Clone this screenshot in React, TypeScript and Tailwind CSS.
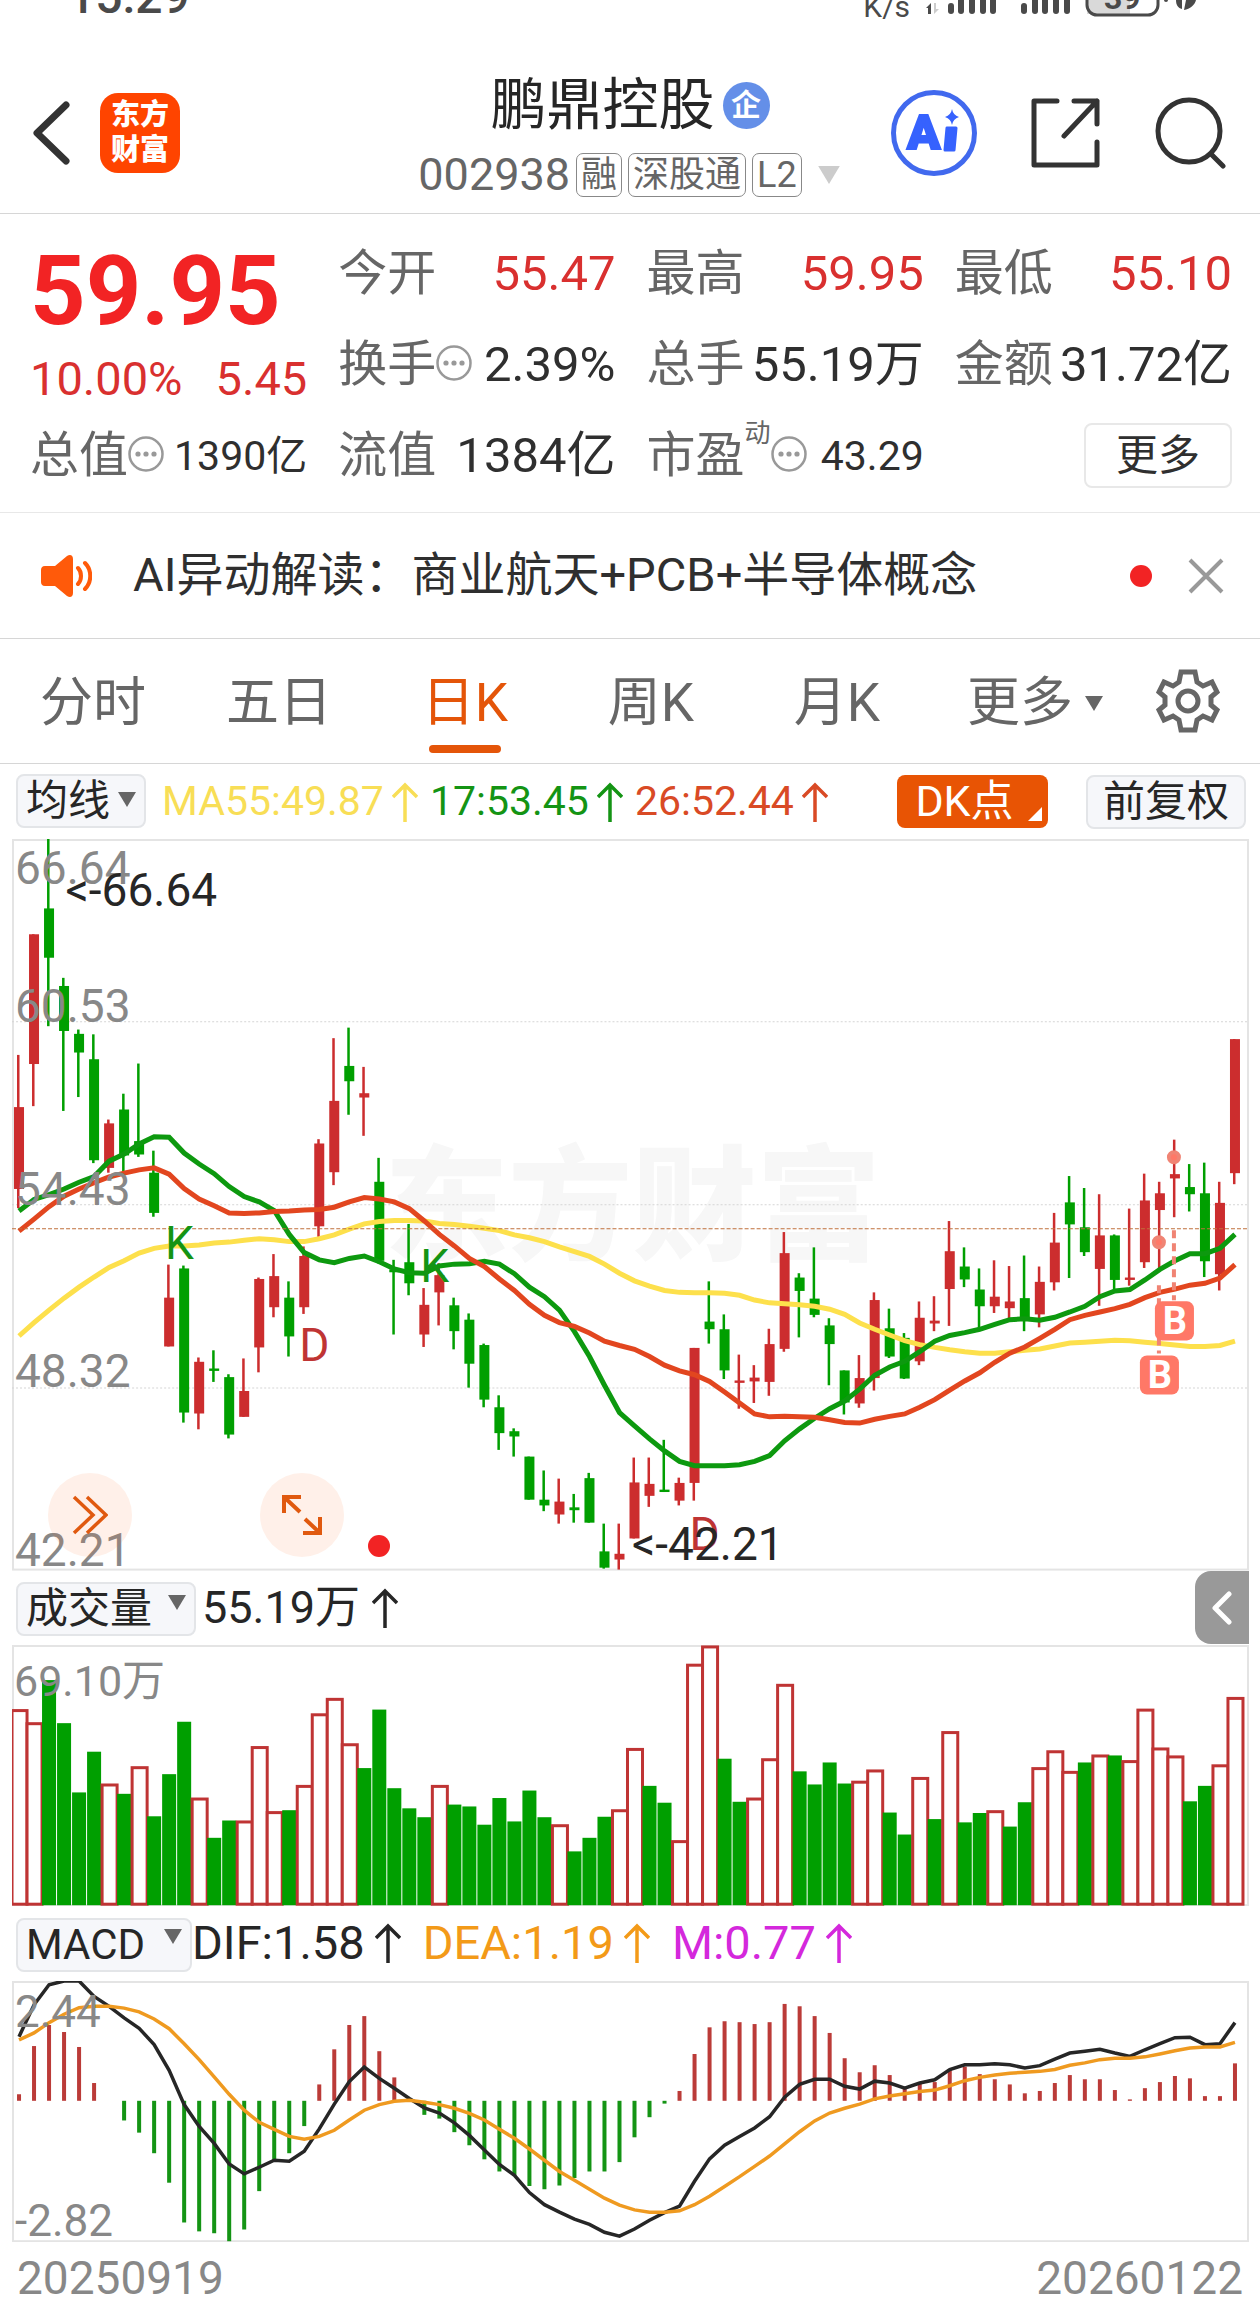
import { useState } from 'react'
import type { ReactNode } from 'react'

type Candle = ['r' | 'g', number, number, number, number]

const RED = '#cc2d2e'
const GREEN = '#009f00'
const STEP = 15

// [colour, high, body top, body bottom, low], measured downwards
const candles: Candle[] = [
  ['r', 470, 579, 750, 790], ['r', 218, 218, 489, 577], ['g', 19, 164, 267, 410],
  ['g', 309, 326, 420, 587], ['g', 417, 426, 465, 558], ['g', 427, 479, 690, 696],
  ['r', 605, 613, 706, 716], ['g', 551, 584, 680, 716], ['g', 488, 650, 678, 683],
  ['g', 670, 716, 800, 808], ['r', 908, 977, 1079, 1079], ['g', 910, 916, 1217, 1238],
  ['r', 1102, 1111, 1219, 1252], ['g', 1087, 1125, 1130, 1153], ['g', 1137, 1143, 1263, 1271],
  ['r', 1104, 1172, 1226, 1226], ['r', 935, 938, 1081, 1133], ['r', 886, 932, 997, 1018],
  ['g', 943, 977, 1058, 1100], ['r', 870, 890, 997, 1011], ['r', 646, 655, 828, 850],
  ['r', 435, 566, 715, 742], ['g', 413, 493, 525, 595], ['r', 495, 550, 559, 639],
  ['g', 685, 735, 900, 906], ['g', 898, 918, 924, 1054], ['g', 823, 903, 947, 972],
  ['r', 957, 992, 1054, 1080], ['r', 905, 930, 966, 1035], ['g', 977, 993, 1047, 1085],
  ['g', 1010, 1023, 1115, 1165], ['g', 1073, 1076, 1190, 1206], ['g', 1181, 1206, 1260, 1295],
  ['g', 1250, 1256, 1267, 1309], ['g', 1309, 1309, 1399, 1399], ['g', 1338, 1399, 1411, 1423],
  ['r', 1355, 1403, 1430, 1449], ['g', 1387, 1415, 1421, 1447], ['g', 1343, 1354, 1447, 1447],
  ['g', 1449, 1507, 1541, 1543], ['r', 1449, 1512, 1524, 1545], ['r', 1311, 1363, 1480, 1480],
  ['r', 1311, 1366, 1391, 1414], ['g', 1274, 1378, 1383, 1383], ['r', 1353, 1364, 1401, 1411],
  ['r', 1082, 1082, 1364, 1401], ['g', 943, 1027, 1043, 1073], ['g', 1012, 1043, 1129, 1147],
  ['r', 1096, 1150, 1155, 1209], ['r', 1118, 1144, 1152, 1197], ['r', 1042, 1074, 1153, 1182],
  ['r', 840, 884, 1084, 1090], ['g', 926, 935, 963, 1060], ['g', 872, 979, 1013, 1018],
  ['g', 1020, 1035, 1074, 1160], ['g', 1129, 1129, 1196, 1221], ['r', 1097, 1145, 1198, 1207],
  ['r', 966, 982, 1145, 1171], ['g', 1000, 1041, 1100, 1103], ['g', 1051, 1061, 1146, 1147],
  ['r', 985, 1019, 1110, 1118], ['r', 974, 1025, 1031, 1047], ['r', 817, 880, 959, 1036],
  ['g', 872, 912, 939, 955], ['g', 916, 960, 995, 1045], ['r', 899, 975, 995, 1009],
  ['r', 911, 985, 999, 1020], ['g', 889, 978, 1025, 1047], ['r', 912, 944, 1012, 1039],
  ['r', 800, 862, 945, 962], ['g', 723, 778, 824, 936], ['g', 748, 830, 882, 890],
  ['r', 761, 847, 917, 994], ['g', 845, 847, 940, 962], ['r', 791, 935, 940, 952],
  ['r', 718, 774, 903, 915], ['r', 735, 759, 794, 915], ['r', 647, 719, 728, 809],
  ['g', 698, 746, 761, 797], ['g', 695, 759, 901, 934], ['r', 735, 779, 928, 962],
  ['r', 437, 437, 717, 740],
]

const ma17 = [
  796, 772, 762, 750, 736, 724, 692, 677, 656, 641, 642, 675, 698, 718, 745, 766, 777, 795, 845,
  883, 898, 904, 895, 890, 902, 917, 925, 926, 911, 907, 906, 901, 907, 927, 955, 975, 1003, 1048,
  1100, 1160, 1217, 1245, 1272, 1297, 1319, 1328, 1328, 1328, 1326, 1319, 1307, 1276, 1251, 1229,
  1209, 1193, 1168, 1139, 1122, 1110, 1090, 1068, 1056, 1050, 1043, 1033, 1023, 1021, 1024, 1018,
  1007, 995, 975, 963, 960, 940, 918, 900, 885, 885, 874, 845,
]

const ma26 = [
  838, 813, 787, 765, 750, 737, 725, 717, 710, 706, 719, 749, 771, 785, 800, 801, 800, 797, 796,
  794, 793, 788, 777, 768, 771, 777, 791, 817, 845, 869, 895, 912, 938, 962, 991, 1014, 1029, 1037,
  1051, 1068, 1077, 1085, 1100, 1118, 1130, 1138, 1152, 1174, 1197, 1220, 1226, 1225, 1226, 1227,
  1232, 1238, 1239, 1231, 1225, 1220, 1206, 1190, 1170, 1151, 1134, 1112, 1093, 1080, 1062, 1043,
  1023, 1014, 1007, 1000, 991, 977, 966, 959, 951, 947, 936, 908,
]

const ma55 = [
  1057, 1029, 1003, 978, 955, 934, 914, 900, 884, 874, 869, 869, 867, 863, 861, 857, 854, 856, 860,
  860, 854, 846, 834, 823, 818, 816, 816, 817, 822, 824, 828, 832, 837, 846, 852, 860, 871, 881,
  891, 907, 926, 942, 953, 962, 966, 967, 967, 968, 972, 982, 988, 990, 992, 995, 1001, 1012, 1030,
  1043, 1055, 1067, 1075, 1081, 1086, 1090, 1093, 1093, 1090, 1087, 1084, 1078, 1072, 1070, 1068,
  1066, 1067, 1070, 1073, 1076, 1079, 1079, 1077, 1068,
]

// top edge of each bar, negative for a falling day
const volumes = [
  298, 326, -235, -327, -475, -388, 457, -478, 420, -526, -436, -324, 487, -572, -535, 536, 377,
  516, -513, 460, 307, 274, 371, -423, -298, -466, -509, -528, 460, -501, -505, -544, -487, -537,
  -471, -528, 544, -601, -572, -527, 512, 381, -461, -497, 578, 201, 162, -403, -495, 487, 403, 244,
  -430, -458, -411, -456, 451, 427, -518, -565, 443, -532, 345, -539, -519, 514, -548, -496, 422,
  386, 430, -411, 395, -396, 407, 297, 380, 397, -494, -461, 416, 272,
]

const macdBars = [
  1121, 1018, 973, 988, 1020, 1097, 1135, 1177, 1203, 1247, 1310, 1395, 1414, 1418, 1435, 1410,
  1328, 1265, 1247, 1189, 1100, 1025, 973, 954, 1029, 1085, 1130, 1165, 1173, 1202, 1230, 1260,
  1286, 1295, 1317, 1324, 1316, 1300, 1286, 1286, 1266, 1213, 1170, 1141, 1114, 1035, 978, 965, 967,
  971, 967, 928, 933, 954, 990, 1044, 1074, 1059, 1080, 1107, 1097, 1095, 1067, 1062, 1078, 1089,
  1100, 1119, 1114, 1097, 1080, 1089, 1089, 1112, 1132, 1108, 1095, 1082, 1087, 1125, 1125, 1055,
]

const dif = [
  998, 930, 887, 879, 879, 912, 933, 958, 980, 1015, 1070, 1143, 1190, 1226, 1270, 1291, 1277,
  1262, 1264, 1243, 1195, 1142, 1094, 1063, 1087, 1108, 1130, 1150, 1161, 1182, 1209, 1240, 1271,
  1294, 1331, 1357, 1373, 1388, 1399, 1416, 1424, 1409, 1390, 1374, 1360, 1307, 1259, 1230, 1211,
  1193, 1169, 1127, 1100, 1089, 1089, 1104, 1110, 1093, 1097, 1108, 1097, 1090, 1068, 1058, 1058,
  1056, 1058, 1065, 1060, 1046, 1033, 1029, 1025, 1033, 1040, 1026, 1013, 1000, 999, 1015, 1013,
  968,
]

const dea = [
  1005, 990, 968, 950, 936, 933, 933, 937, 945, 960, 981, 1013, 1047, 1084, 1121, 1155, 1181, 1196,
  1211, 1217, 1211, 1198, 1176, 1155, 1143, 1136, 1134, 1138, 1143, 1151, 1162, 1176, 1196, 1215,
  1238, 1262, 1286, 1305, 1324, 1343, 1358, 1368, 1373, 1373, 1370, 1357, 1339, 1318, 1297, 1275,
  1253, 1227, 1201, 1178, 1161, 1151, 1142, 1131, 1125, 1120, 1115, 1112, 1103, 1092, 1085, 1080,
  1076, 1074, 1072, 1068, 1059, 1054, 1047, 1044, 1044, 1041, 1035, 1028, 1022, 1020, 1020, 1010,
]

const priceY = (v: number) => ((v - 19) * 730) / 1526
const volumeY = (v: number) => ((v - 160) * 260) / 556
const macdY = (v: number) => ((v - 879) * 260) / 556

const toPoints = (values: number[], scale: (v: number) => number) =>
  values.map((v, i) => `${7 + STEP * i},${scale(v).toFixed(1)}`).join(' ')

function Triangle({ className }: { className: string }) {
  return (
    <svg viewBox="0 0 18 15" className={className} aria-hidden="true">
      <path d="M0 0h18L9 15z" fill="currentColor" />
    </svg>
  )
}

function UpArrow() {
  return (
    <svg viewBox="0 0 26 40" className="h-10 w-[26px]" fill="none" stroke="currentColor" strokeWidth="3.5" aria-hidden="true">
      <path d="M13 40V3M1 15 13 3l12 12" />
    </svg>
  )
}

function MoreDots() {
  return (
    <svg viewBox="0 0 36 36" className="mb-1 h-9 w-9 shrink-0" aria-hidden="true">
      <circle cx="18" cy="18" r="16.5" fill="none" stroke="#999" strokeWidth="2.5" />
      <circle cx="10" cy="18" r="2.6" fill="#999" />
      <circle cx="18" cy="18" r="2.6" fill="#999" />
      <circle cx="26" cy="18" r="2.6" fill="#999" />
    </svg>
  )
}

function StatusBar() {
  return (
    <div className="flex h-[21px] items-end overflow-hidden pr-[60px] pl-[68px] text-[#4a4a4a]">
      <span className="text-[48px] leading-none font-medium">15:29</span>
      <span className="ml-auto text-[30px] leading-[28px]">K/s</span>
      <svg viewBox="0 0 274 21" className="ml-4 h-[21px] w-[274px]" fill="#4a4a4a" aria-hidden="true">
        <path d="M0 8 5 3v11H2V8z" />
        <path d="M8 3h2v6h3l-5 5z" fill="#ccc" />
        <rect x="22" y="3" width="6" height="11" rx="3" />
        <rect x="32" y="-6" width="6" height="20" rx="3" />
        <rect x="43" y="-6" width="6" height="20" rx="3" />
        <rect x="54" y="-6" width="6" height="20" rx="3" />
        <rect x="64" y="-6" width="6" height="20" rx="3" />
        <rect x="95" y="3" width="6" height="11" rx="3" />
        <rect x="106" y="-6" width="6" height="20" rx="3" />
        <rect x="116" y="-6" width="6" height="20" rx="3" />
        <rect x="127" y="-6" width="6" height="20" rx="3" />
        <rect x="138" y="-6" width="6" height="20" rx="3" />
        <rect x="161" y="-20" width="43" height="34" fill="#d9d9d9" />
        <rect x="161" y="-20" width="71" height="35" rx="10" fill="none" stroke="#4a4a4a" strokeWidth="3" />
        <text x="178" y="9" fontSize="32" fontWeight="700">39</text>
        <circle cx="240" cy="0" r="2" />
        <path d="M250 0c0 5 2 8 6 9V0zM258 10c6-1 11-5 12-10h-10z" />
      </svg>
    </div>
  )
}

function Tag({ children }: { children: ReactNode }) {
  return (
    <span className="rounded-[7px] border border-[#888] px-1 text-[36px] leading-[42px]">{children}</span>
  )
}

function Header() {
  return (
    <header className="grid grid-cols-[1fr_auto_1fr] items-center border-b border-[#d6d6d6] px-[33px] pt-8 text-[#333]">
      <div className="flex items-center gap-[30px]">
        <button aria-label="返回">
          <svg viewBox="0 0 37 64" className="h-16 w-[37px]" fill="none" stroke="currentColor" strokeWidth="7" strokeLinecap="round" strokeLinejoin="round">
            <path d="M33 4 4 32l29 28" />
          </svg>
        </button>
        <a href="#home" className="flex h-20 w-20 flex-col items-center justify-center rounded-[18px] bg-[#ff4400] text-[29px] leading-[35px] font-black text-white">
          <span>东方</span>
          <span>财富</span>
        </a>
      </div>
      <div className="flex h-40 flex-col items-center pt-4">
        <h1 className="flex items-center gap-2 text-[56px] leading-[72px] text-[#262626]">
          鹏鼎控股
          <span className="flex h-[47px] w-[47px] items-center justify-center rounded-full bg-[#648fe8] text-[30px] leading-none font-bold text-white">
            企
          </span>
        </h1>
        <div className="mt-3 flex items-center gap-[6px] text-[#666]">
          <span className="text-[45px] leading-[44px]">002938</span>
          <Tag>融</Tag>
          <Tag>深股通</Tag>
          <Tag>L2</Tag>
          <Triangle className="ml-2 h-[18px] w-[26px] text-[#ccc]" />
        </div>
      </div>
      <div className="flex items-center justify-end gap-[54px]">
        <button aria-label="Ai">
          <svg viewBox="0 0 86 86" className="h-[86px] w-[86px]">
            <circle cx="43" cy="43" r="40.5" fill="none" stroke="#4169ee" strokeWidth="5" />
            <text x="16" y="59" fontSize="49" fontWeight="900" fill="#3662fe" stroke="#3662fe" strokeWidth="2">A</text>
            <path d="M56 38h9l-2 22h-9z" fill="#3662fe" stroke="#3662fe" strokeWidth="3" strokeLinejoin="round" />
            <path d="M61 19q1 6 7 8-6 2-7 8-1-6-7-8 6-2 7-8z" fill="#3662fe" />
          </svg>
        </button>
        <button aria-label="分享">
          <svg viewBox="0 0 70 70" className="h-[70px] w-[70px]" fill="none" stroke="currentColor" strokeWidth="5" strokeLinecap="round" strokeLinejoin="round">
            <path d="M26 3H3v64h63V44M43 3h23v23M66 3 33 38" />
          </svg>
        </button>
        <button aria-label="搜索">
          <svg viewBox="0 0 72 72" className="h-[72px] w-[72px]" fill="none" stroke="currentColor" strokeWidth="5" strokeLinecap="round">
            <circle cx="34" cy="34" r="31" />
            <path d="m56 57 12 12" />
          </svg>
        </button>
      </div>
    </header>
  )
}

interface QuoteProps {
  label: string
  value: string
  sup?: string
  hint?: boolean
  up?: boolean
  small?: boolean
}

function Quote({ label, value, sup, hint, up, small }: QuoteProps) {
  return (
    <div className="flex h-[91px] items-center whitespace-nowrap">
      <dt className="flex items-center text-[49px] leading-[60px] text-[#666]">
        {label}
        {sup && <sup className="self-start text-[26px] leading-[40px]">{sup}</sup>}
        {hint && <MoreDots />}
      </dt>
      <dd
        className={`ml-auto leading-[60px] ${small ? 'text-[41px]' : 'text-[49px]'} ${
          up ? 'text-[#d9302f]' : 'text-[#2f2f2f]'
        }`}
      >
        {value}
      </dd>
    </div>
  )
}

function QuotePanel() {
  return (
    <section className="border-b border-[#e8e8e8] pt-[14px] pr-[28px] pb-[11px] pl-[30px]">
      <dl className="grid grid-cols-4 gap-x-[31px]">
        <div className="row-span-2 pt-[15px]">
          <dt className="sr-only">最新价</dt>
          <dd className="text-[97px] leading-[96px] font-bold text-[#f22324]">59.95</dd>
          <dd className="mt-4 flex justify-between text-[47px] leading-[48px] text-[#d9302f]">
            <span>10.00%</span>
            <span>5.45</span>
          </dd>
        </div>
        <Quote label="今开" value="55.47" up />
        <Quote label="最高" value="59.95" up />
        <Quote label="最低" value="55.10" up />
        <Quote label="换手" value="2.39%" hint />
        <Quote label="总手" value="55.19万" />
        <Quote label="金额" value="31.72亿" />
        <Quote label="总值" value="1390亿" hint small />
        <Quote label="流值" value="1384亿" />
        <Quote label="市盈" value="43.29" sup="动" hint small />
        <div className="flex h-[91px] items-center justify-end">
          <button className="h-[65px] w-[148px] rounded-lg border-2 border-[#e8e8e8] text-[42px] leading-none text-[#2f2f2f]">
            更多
          </button>
        </div>
      </dl>
    </section>
  )
}

function NewsBar() {
  return (
    <section className="flex h-[126px] items-center border-b border-[#d6d6d6] pr-9 pl-10 text-[#2f2f2f]">
      <svg viewBox="0 0 52 44" className="h-11 w-[52px] shrink-0" aria-hidden="true">
        <path d="M5 12h10L27 2c3-2 6-1 6 3v34c0 4-3 5-6 3L15 32H5c-3 0-4-2-4-4V16c0-2 1-4 4-4z" fill="#ff5a0a" />
        <path d="M38 14c4 4 4 12 0 16M45 9c7 7 7 19 0 26" fill="none" stroke="#ff5a0a" strokeWidth="4" strokeLinecap="round" />
      </svg>
      <a href="#news" className="ml-[41px] text-[47px] whitespace-nowrap">
        AI异动解读：商业航天+PCB+半导体概念
      </a>
      <span className="ml-auto h-[22px] w-[22px] rounded-full bg-[#f22324]" />
      <button aria-label="关闭" className="ml-9 text-[#999]">
        <svg viewBox="0 0 36 36" className="h-9 w-9" stroke="currentColor" strokeWidth="4">
          <path d="m2 2 32 32M34 2 2 34" />
        </svg>
      </button>
    </section>
  )
}

const tabs = ['分时', '五日', '日K', '周K', '月K']

function PeriodTabs() {
  const [active, setActive] = useState('日K')
  return (
    <nav className="flex h-[125px] items-end border-b border-[#d6d6d6] pb-[10px] text-[53px] leading-[64px] text-[#666]">
      {tabs.map((tab) => (
        <button
          key={tab}
          onClick={() => setActive(tab)}
          className={`flex flex-1 flex-col items-center ${active === tab ? 'text-[#e45509]' : ''}`}
        >
          {tab}
          <span className={`mt-[10px] h-2 w-[72px] rounded-full ${active === tab ? 'bg-[#e45509]' : ''}`} />
        </button>
      ))}
      <button className="mb-[18px] flex w-[210px] items-center justify-center gap-3">
        更多
        <Triangle className="h-[15px] w-[18px]" />
      </button>
      <button aria-label="设置" className="mb-5 flex h-16 w-[120px] items-center pl-[16px]">
        <svg viewBox="-32 -32 64 64" className="h-16 w-16" fill="none" stroke="currentColor" strokeWidth="5">
          <path d="M-7-29H7L9-19 15-15 24-19 29-9 23-4V4L29 9 24 19 15 15 9 19 7 29H-7L-9 19-15 15-24 19-29 9-23 4V-4L-29-9-24-19-15-15-9-19z" />
          <circle r="10" />
        </svg>
      </button>
    </nav>
  )
}

function Picker({ label, value, className }: { label: string; value: string; className: string }) {
  return (
    <label className={`relative block shrink-0 ${className}`}>
      <span className="sr-only">{label}</span>
      <select className="h-[54px] w-full appearance-none rounded-lg border-2 border-[#e3e5e8] bg-[#f6f7fa] pl-2 text-[42px] leading-[50px] text-[#262626]">
        <option>{value}</option>
      </select>
      <Triangle className="pointer-events-none absolute top-[21px] right-[10px] h-[15px] w-[18px] text-[#666]" />
    </label>
  )
}

function Indicator({ text, className }: { text: string; className: string }) {
  return (
    <span className={`flex items-center whitespace-nowrap ${className}`}>
      {text}
      <UpArrow />
    </span>
  )
}

function PriceToolbar() {
  return (
    <div className="flex h-[75px] items-center pr-[14px] pl-4 text-[41px]">
      <Picker label="主图指标" value="均线" className="w-[130px]" />
      <div className="ml-4 flex gap-3">
        <Indicator text="MA55:49.87" className="gap-2 text-[#f8de56]" />
        <Indicator text="17:53.45" className="gap-2 text-[#149414]" />
        <Indicator text="26:52.44" className="gap-2 text-[#d94a25]" />
      </div>
      <button className="relative ml-auto h-[53px] w-[151px] rounded-lg bg-[#e85404] pr-4 text-[43px] leading-none text-white">
        DK点
        <svg viewBox="0 0 14 14" className="absolute right-[6px] bottom-[7px] h-[14px] w-[14px]" aria-hidden="true">
          <path d="M14 0v14H0z" fill="#fff" />
        </svg>
      </button>
      <button className="ml-[38px] h-[54px] w-[160px] rounded-lg border-2 border-[#e3e5e8] bg-[#f6f7fa] text-[42px] leading-none text-[#262626]">
        前复权
      </button>
    </div>
  )
}

function BuyMark({ x, y }: { x: number; y: number }) {
  return (
    <g>
      <rect x={x} y={y} width="39" height="39" rx="7" fill="#ff7867" />
      <text x={x + 20} y={y + 33} fontSize="38" fontWeight="700" fill="#fff" textAnchor="middle">B</text>
    </g>
  )
}

function PriceChart() {
  return (
    <div className="relative mr-[11px] ml-3">
      <svg viewBox="0 0 1236 731" className="block w-full" fontSize="46" role="img" aria-label="日K线">
        <text x="372" y="411" fontSize="124" fontWeight="900" fill="#f7f7f7">东方财富</text>
        <rect x="1" y="1" width="1234" height="729" fill="none" stroke="#e4e4e4" strokeWidth="2" />
        {[182, 365, 548].map((y) => (
          <path key={y} d={`M0 ${y}.5H1236`} stroke="#d5d5d5" strokeDasharray="2 2" />
        ))}
        {candles.map(([color, high, top, bottom, low], i) => (
          <g key={i} fill={color === 'r' ? RED : GREEN}>
            <rect x={5 + STEP * i} y={priceY(high)} width="2.5" height={priceY(low) - priceY(high)} />
            <rect x={2 + STEP * i} y={priceY(top)} width="10" height={priceY(bottom) - priceY(top)} />
          </g>
        ))}
        <g fill="none" strokeWidth="5">
          <polyline points={toPoints(ma55, priceY)} stroke="#fde04c" />
          <polyline points={toPoints(ma17, priceY)} stroke="#0d990f" />
          <polyline points={toPoints(ma26, priceY)} stroke="#e2461f" />
        </g>
        <path d="M0 389.5H1236" stroke="#c0703c" strokeDasharray="4 2" />
        <g fill="#149414">
          <text x="153" y="420">K</text>
          <text x="408" y="443">K</text>
        </g>
        <g fill="#bf3434">
          <text x="287" y="522">D</text>
          <text x="677" y="710">D</text>
        </g>
        <g fill="#ff7867" stroke="#f08474" strokeWidth="4">
          <path d="M1161 391v70M1146 446v68" fill="none" strokeDasharray="8 5" />
          <circle cx="1161" cy="318" r="5" />
          <circle cx="1146" cy="403" r="5" />
        </g>
        <BuyMark x={1142} y={462} />
        <BuyMark x={1127} y={516} />
        <g fill="#888">
          <text x="3" y="45">66.64</text>
          <text x="3" y="183">60.53</text>
          <text x="3" y="366">54.43</text>
          <text x="3" y="548">48.32</text>
          <text x="3" y="726">42.21</text>
        </g>
        <g fill="#262626" textAnchor="end">
          <text x="205" y="67">&lt;-66.64</text>
          <text x="771" y="720">&lt;-42.21</text>
        </g>
      </svg>
      <button aria-label="快进" className="absolute bottom-[14px] left-9 flex h-[84px] w-[84px] items-center justify-center rounded-full bg-[#ff6a20]/10">
        <svg viewBox="0 0 36 40" className="h-10 w-9" fill="none" stroke="#e0590f" strokeWidth="3.5">
          <path d="m2 2 19 18L2 38M15 2l19 18-19 18" />
        </svg>
      </button>
      <button aria-label="全屏" className="absolute bottom-[14px] left-[248px] flex h-[84px] w-[84px] items-center justify-center rounded-full bg-[#ff6a20]/10">
        <svg viewBox="0 0 40 42" className="h-[42px] w-10" fill="none" stroke="#e0590f" strokeWidth="4">
          <path d="M2 19V3h17M2 3l16 15M38 23v16H21M38 39 23 25" />
        </svg>
      </button>
      <span className="absolute bottom-[14px] left-[356px] h-[22px] w-[22px] rounded-full bg-[#f22324]" />
    </div>
  )
}

function VolumeChart() {
  return (
    <>
      <div className="flex h-[74px] items-center pr-[11px] pl-4 text-[45px] text-[#262626]">
        <Picker label="副图一指标" value="成交量" className="w-[180px]" />
        <Indicator text="55.19万" className="ml-[6px] gap-3" />
        <button aria-label="展开" className="ml-auto flex h-[73px] w-[54px] items-center justify-center rounded-l-2xl bg-[#999]">
          <svg viewBox="0 0 20 34" className="h-[34px] w-5" fill="none" stroke="#fff" strokeWidth="5" strokeLinecap="round" strokeLinejoin="round">
            <path d="M17 3 3 17l14 14" />
          </svg>
        </button>
      </div>
      <div className="mr-[11px] ml-3">
        <svg viewBox="0 0 1236 261" className="block w-full" fontSize="43" role="img" aria-label="成交量">
          <rect x="1" y="1" width="1234" height="259" fill="none" stroke="#e4e4e4" strokeWidth="2" />
          {volumes.map((v, i) =>
            v < 0 ? (
              <rect key={i} x={STEP * i} y={volumeY(-v)} width="14" height={260 - volumeY(-v)} fill={GREEN} />
            ) : (
              <rect
                key={i}
                x={STEP * i}
                y={volumeY(v) + 1}
                width="15"
                height={258 - volumeY(v)}
                fill="#fff"
                stroke="#bf3434"
                strokeWidth="3"
              />
            )
          )}
          <text x="2" y="51" fill="#888">69.10万</text>
        </svg>
      </div>
    </>
  )
}

function MacdChart() {
  return (
    <>
      <div className="flex h-[75px] items-center pl-4 text-[47px]">
        <Picker label="副图二指标" value="MACD" className="w-[176px]" />
        <div className="flex gap-[22px]">
          <Indicator text="DIF:1.58" className="gap-[10px] text-[#262626]" />
          <Indicator text="DEA:1.19" className="gap-[10px] text-[#f39a18]" />
          <Indicator text="M:0.77" className="gap-[10px] text-[#d428dc]" />
        </div>
      </div>
      <div className="mr-[11px] ml-3">
        <svg viewBox="0 0 1236 261" className="block w-full" fontSize="44" role="img" aria-label="MACD">
          <rect x="1" y="1" width="1234" height="259" fill="none" stroke="#e4e4e4" strokeWidth="2" />
          {macdBars.map((v, i) => (
            <rect
              key={i}
              x={5 + STEP * i}
              y={macdY(Math.min(v, 1135))}
              width="4"
              height={Math.abs(macdY(v) - macdY(1135))}
              fill={v > 1135 ? '#149414' : '#bb3b38'}
            />
          ))}
          <g fill="none" strokeWidth="3.5">
            <polyline points={toPoints(dif, macdY)} stroke="#262626" />
            <polyline points={toPoints(dea, macdY)} stroke="#ef9a20" />
          </g>
          <g fill="#888">
            <text x="3" y="46">2.44</text>
            <text x="3" y="255">-2.82</text>
          </g>
        </svg>
      </div>
      <div className="flex justify-between px-[17px] pt-[6px] text-[46px] leading-[60px] text-[#888]">
        <time dateTime="2025-09-19">20250919</time>
        <time dateTime="2026-01-22">20260122</time>
      </div>
    </>
  )
}

export default function App() {
  return (
    <div className="overflow-hidden bg-white font-[Roboto,'Noto_Sans_CJK_SC',sans-serif]">
      <StatusBar />
      <Header />
      <main>
        <QuotePanel />
        <NewsBar />
        <PeriodTabs />
        <PriceToolbar />
        <PriceChart />
        <VolumeChart />
        <MacdChart />
      </main>
    </div>
  )
}
